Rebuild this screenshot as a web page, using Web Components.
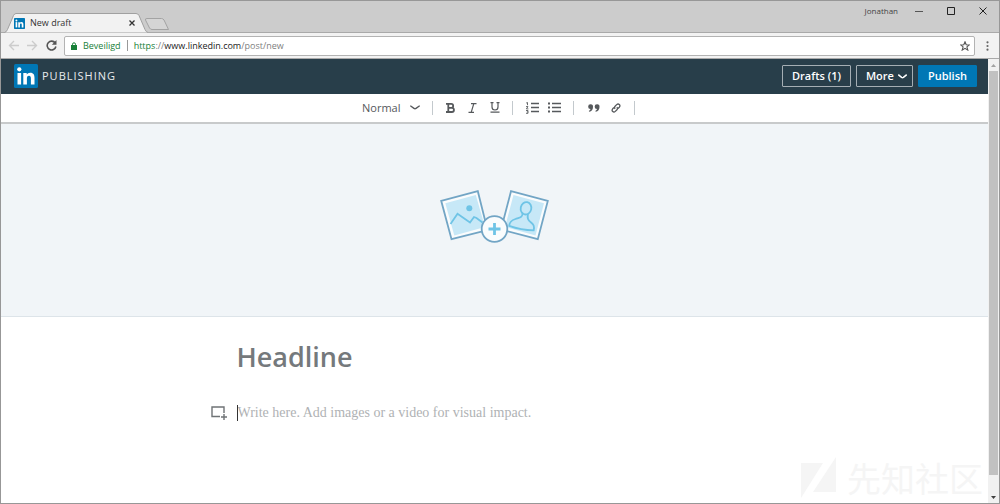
<!DOCTYPE html>
<html lang="en">
<head>
<meta charset="utf-8">
<meta name="viewport" content="width=device-width, initial-scale=1">
<title>New draft</title>
<style>
  html, body { margin: 0; }
  body { font-family: "Open Sans", "Noto Sans", sans-serif; background: #fff; }
</style>
</head>
<body>
<browser-window>
  <tab-strip slot="tabs" user="Jonathan">New draft</tab-strip>
  <address-bar slot="address"></address-bar>
  <publishing-header></publishing-header>
  <format-toolbar></format-toolbar>
  <cover-picker></cover-picker>
  <draft-editor></draft-editor>
  <water-mark>先知社区</water-mark>
</browser-window>

<script>
const RESET = `
  *, *::before, *::after { box-sizing: border-box; }
  button, input, textarea, select { font: inherit; color: inherit; margin: 0; padding: 0; border: 0; background: none; outline: 0; }
  svg { display: block; flex: none; }
`;

function define(name, css, html) {
  const template = document.createElement('template');
  template.innerHTML = `<style>${RESET}${css}</style>${html}`;
  customElements.define(name, class extends HTMLElement {
    constructor() {
      super();
      this.attachShadow({ mode: 'open' }).append(template.content.cloneNode(true));
      const user = this.shadowRoot.querySelector('.user');
      if (user) user.textContent = this.getAttribute('user');
    }
  });
}

define('linkedin-logo', `
  :host { display: block; width: 24px; height: 24px; flex: none; }
  svg { width: 100%; height: 100%; }
`, `
  <svg viewBox="0 0 24 24" role="img" aria-label="LinkedIn">
    <rect width="24" height="24" rx="1.5" fill="#0077b5"/>
    <g fill="#fff">
      <circle cx="5.3" cy="5.3" r="2.1"/>
      <rect x="3.5" y="9" width="3.6" height="11.5"/>
      <path d="M9.3 9h3.4v1.6c.6-1.1 1.9-1.9 3.5-1.9 3.5 0 4.3 2.3 4.3 5.3v6.500h-3.600v-5.800c0-1.500-.2-2.900-1.900-2.900-1.700 0-2.100 1.300-2.100 2.800v5.900H9.300z"/>
    </g>
  </svg>
`);

define('browser-window', `
  :host { display: flex; flex-direction: column; min-height: 100vh; box-sizing: border-box; border: 1px solid #979797; background: #fff; }
  .view { flex: 1; display: flex; }
  main { flex: 1; min-width: 0; position: relative; }
  .scroll { width: 11px; display: flex; flex-direction: column; align-items: center; background: #f1f1f1; }
  .scroll span { height: 12px; display: grid; place-items: center; }
  .thumb { flex: 1; width: 9px; background: #c1c1c1; }
  .rest { height: 16px; }
`, `
  <slot name="tabs"></slot>
  <slot name="address"></slot>
  <div class="view">
    <main><slot></slot></main>
    <div class="scroll" aria-hidden="true">
      <span><svg width="5" height="3"><path d="M0 3h5L2.500 0z" fill="#a3a3a3"/></svg></span>
      <div class="thumb"></div>
      <div class="rest"></div>
      <span><svg width="5" height="3"><path d="M0 0h5L2.500 3z" fill="#404040"/></svg></span>
    </div>
  </div>
`);

define('tab-strip', `
  :host { display: flex; height: 32px; background: linear-gradient(#ccc, #ccc 31px, #a9a9a9 31px); color: #333; }
  .tab { display: grid; width: 144px; margin: 12px 0 0 3px; height: 20px; }
  .tab > * { grid-area: 1 / 1; }
  .label { display: flex; align-items: center; padding: 0 12px 0 10px; font-size: 9px; line-height: 16px; }
  linkedin-logo { width: 11px; height: 11px; margin-right: 5px; }
  .label button { margin-left: auto; width: 8px; height: 16px; display: grid; place-items: center; }
  .new { align-self: flex-start; margin-top: 17px; margin-left: -4px; height: 12px; }
  .controls { margin-left: auto; display: flex; height: 20px; align-items: center; }
  .user { font-size: 8px; line-height: 12px; margin-right: 16px; color: #444; }
  .controls button { width: 10px; height: 20px; display: grid; place-items: center; margin-right: 22px; }
  .controls button:last-child { margin-right: 11px; }
`, `
  <div class="tab">
    <svg width="144" height="20"><path d="M0 20L.5 19.500Q2.500 19 3.500 16.500L9.500 2.500Q10.500.5 12 .5H132Q134 .5 135 2.500L141 16.500Q142 19 144 19.500V20z" fill="#f2f2f2" stroke="#a0a0a0"/></svg>
    <div class="label"><linkedin-logo></linkedin-logo><slot></slot>
      <button aria-label="Close tab"><svg width="6" height="6"><path d="M.5.5l5 5M5.500.5l-5 5" stroke="#333" stroke-width="1.300"/></svg></button></div>
  </div>
  <button class="new" aria-label="New tab"><svg width="26" height="13"><path d="M3 .5H17.500Q19 .5 20 2L24.500 11.500H8Q6.500 11.500 5.500 10L1.500 2Q1 .5 3 .5z" fill="#d5d5d5" stroke="#a3a3a3"/></svg></button>
  <div class="controls">
    <span class="user"></span>
    <button aria-label="Minimize"><svg width="8" height="8"><path d="M0 4.500h8" stroke="#555"/></svg></button>
    <button aria-label="Maximize"><svg width="8" height="8"><path d="M.5.5h7v7h-7z" fill="none" stroke="#222"/></svg></button>
    <button aria-label="Close"><svg width="8" height="8"><path d="M.5.5l7 7M7.500.5l-7 7" stroke="#222"/></svg></button>
  </div>
`);

define('address-bar', `
  :host { display: flex; align-items: center; height: 26px; box-sizing: border-box; padding: 0 8px 0 7px; background: #f2f2f2; border-bottom: 1px solid #a9a9a9; color: #808080; }
  nav { display: flex; gap: 8px; margin-right: 7px; }
  .field { flex: 1; display: flex; align-items: center; height: 20px; background: #fff; border: 1px solid #b3b3b3; border-radius: 2px; font-size: 9px; line-height: 16px; padding: 0 4px 0 6px; }
  .safe { color: #188038; padding: 0 6px; margin-right: 6px; border-right: 1px solid #999; line-height: 11px; }
  .url { flex: 1; outline: 0; white-space: nowrap; }
  .url i { font-style: normal; color: #188038; }
  .url b { font-weight: 400; color: #222; }
  .menu { margin-left: 9px; width: 7px; display: grid; place-items: center; }
`, `
  <nav>
    <button aria-label="Back"><svg width="11" height="11"><path d="M11 5.500H1.500M6 1L1.500 5.500 6 10" fill="none" stroke="#ccc" stroke-width="1.400"/></svg></button>
    <button aria-label="Forward"><svg width="11" height="11"><path d="M0 5.500h9.500M5 1l4.500 4.500L5 10" fill="none" stroke="#ccc" stroke-width="1.400"/></svg></button>
    <button aria-label="Reload"><svg width="11" height="11"><path d="M9.200 3A4.400 4.400 0 1 0 9.900 6.500" fill="none" stroke="#555" stroke-width="1.600"/><path d="M10.500 0v4.800H5.800z" fill="#555"/></svg></button>
  </nav>
  <div class="field">
    <svg width="6" height="8"><path d="M1.500 4V2.300a1.500 1.500 0 0 1 3 0V4" fill="none" stroke="#188038"/><rect y="3" width="6" height="5" fill="#188038"/></svg>
    <span class="safe">Beveiligd</span>
    <span class="url" role="textbox" aria-label="Address" contenteditable="true" spellcheck="false"><i>https</i>://<b>www.linkedin.com</b>/post/new</span>
    <button aria-label="Bookmark"><svg width="10" height="10" viewBox="0 0 10 10"><path d="M5 .8l1.200 2.900 3.200.2-2.500 2 .9 3.200L5 7.400 2.200 9.100l.9-3.200-2.500-2 3.200-.2z" fill="none" stroke="#555" stroke-width="1.100"/></svg></button>
  </div>
  <button class="menu" aria-label="Menu"><svg width="3" height="10" fill="#666"><circle cx="1.500" cy="1.300" r="1.100"/><circle cx="1.500" cy="5" r="1.100"/><circle cx="1.500" cy="8.700" r="1.100"/></svg></button>
`);

define('publishing-header', `
  :host { display: flex; align-items: center; height: 35px; box-sizing: border-box; padding: 0 11px 1px 13px; background: #283e4a; color: #fff; }
  .brand { font-size: 11px; line-height: 16px; letter-spacing: 1px; color: #e8ebed; text-decoration: none; margin-left: 4px; }
  .actions { display: flex; gap: 5px; margin-left: auto; }
  .actions button { height: 22px; display: flex; align-items: center; justify-content: center; gap: 4px; border: 1px solid #a5aeb4; border-radius: 1px; font-size: 11px; line-height: 16px; font-weight: 600; padding: 0 9px; }
  .actions .more { padding: 0 5px 0 9px; }
  .actions .publish { background: #0077b5; border-color: #0077b5; }
`, `
  <linkedin-logo></linkedin-logo>
  <a class="brand" href="#">PUBLISHING</a>
  <div class="actions">
    <button>Drafts (1)</button>
    <button class="more">More <svg width="9" height="5"><path d="M.3.7L3.600 3.400Q4.500 4 5.400 3.400L8.700.7" fill="none" stroke="#fff" stroke-width="1.500"/></svg></button>
    <button class="publish">Publish</button>
  </div>
`);

define('format-toolbar', `
  :host { display: flex; justify-content: center; align-items: center; height: 30px; box-sizing: border-box; padding: 0 5px 1px 0; border-bottom: 2px solid #c8cacb; background: #fff; color: #56595c; }
  .group { display: flex; align-items: center; height: 14px; border-right: 1px solid #c3c9cd; padding: 0 12px 0 13px; gap: 9px; }
  .group:first-child { padding: 0 18px 0 0; gap: 4px; }
  .group.marks { padding: 0 11px; }
  select { appearance: none; width: 39px; font-size: 11px; line-height: 16px; height: 16px; }
  button { display: grid; place-items: center; width: 13px; height: 14px; }
`, `
  <div class="group">
    <select aria-label="Text style"><option>Normal</option></select>
    <svg width="10" height="5"><path d="M.3.7L4 3.400Q5 4.100 6 3.400L9.700.7" fill="none" stroke="#56595c" stroke-width="1.400"/></svg>
  </div>
  <div class="group marks">
    <button aria-label="Bold"><svg width="9" height="10"><path d="M0 .9h5.200a2 2 0 0 1 0 4H2.300M5 4.900h.9a2.050 2.050 0 0 1 0 4.100H0M2.300.9v8" fill="none" stroke="#56595c" stroke-width="1.800"/></svg></button>
    <button aria-label="Italic"><svg width="9" height="10"><path d="M3 .6h5.500M.5 9.400H6M5.800.6L3.200 9.400" fill="none" stroke="#56595c" stroke-width="1.200"/></svg></button>
    <button aria-label="Underline"><svg width="10" height="11"><path d="M.5.600h3M6.500.600h3M2 .600v4.400a3 3 0 0 0 6 0V.600M.5 10.200h9" fill="none" stroke="#56595c" stroke-width="1.200"/></svg></button>
  </div>
  <div class="group">
    <button aria-label="Numbered list"><svg width="13" height="12"><path d="M5 1.500h8M5 5.500h8M5 9.500h8" stroke="#56595c" stroke-width="1.300"/><path d="M.2 1L1.500.5V3.200M0 4.600h2L.4 6.900h2M0 8.500h2v2.800H0M.8 9.900H2" fill="none" stroke="#56595c" stroke-width=".9"/></svg></button>
    <button aria-label="Bulleted list"><svg width="13" height="11"><path d="M4 1.500h9M4 5.500h9M4 9.500h9" stroke="#56595c" stroke-width="1.300"/><path d="M0 1.500h2M0 5.500h2M0 9.500h2" stroke="#56595c" stroke-width="2"/></svg></button>
  </div>
  <div class="group">
    <button aria-label="Quote"><svg width="12" height="8" fill="#56595c"><path d="M2.500.3A2.400 2.400 0 0 1 5 2.900C5 5.500 3.600 7 1.300 7.800L.8 6.900c1-.5 1.600-1.100 1.700-1.900A2.350 2.350 0 0 1 2.500.3zM9 .3a2.400 2.400 0 0 1 2.500 2.600c0 2.600-1.400 4.100-3.700 4.900l-.5-.9C8.300 6.400 8.900 5.800 9 5A2.350 2.350 0 0 1 9 .3z"/></svg></button>
    <button aria-label="Link"><svg width="10" height="10" fill="none" stroke="#56595c" stroke-width="1.300"><path d="M4.200 5.800C3 4.600 3.700 3.600 4.300 3L5.700 1.600C7.400 0 10 2 8.300 4.200L7 5.500M5.800 4.200C7 5.400 6.300 6.400 5.700 7L4.300 8.400C2.600 10 0 8 1.700 5.800L3 4.500"/></svg></button>
  </div>
`);

define('cover-picker', `
  :host { display: block; border-bottom: 1px solid #dde4e9; background: #f1f5f8; }
  button { width: 100%; height: 192px; padding: 0 0 4px 1px; display: grid; place-items: center; }
`, `
  <button aria-label="Add a cover image">
    <svg width="110" height="56" viewBox="0 0 110 56" fill="none">
      <path d="M1.200 10.800L37.800 1.200L47.500 40L11.500 49.200z" fill="#fafcfd" stroke="#72a5c5" stroke-width="1.800"/>
      <path d="M5.300 13.300L35.800 5L45 37L14.300 45.500z" fill="#c7e8f7"/>
      <circle cx="29.300" cy="18.200" r="3" fill="#6fc4e6"/>
      <path d="M10.500 34L17.500 23.800L30 32.500L34 27L36.500 28L42.500 32.500" stroke="#6fc4e6" stroke-width="1.800"/>
      <path d="M71 1.200L107.800 11L97.800 49.200L61 39.500z" fill="#fafcfd" stroke="#72a5c5" stroke-width="1.800"/>
      <path d="M73.500 5L104 13.300L95.500 45.500L65 37z" fill="#c7e8f7"/>
      <ellipse cx="86" cy="18.300" rx="5.300" ry="6.200" transform="rotate(12 86 18.300)" stroke="#6fc4e6" stroke-width="1.800"/>
      <path d="M82.500 22.500C83 27.500 80 27.500 75.500 29C71 30.500 69.500 32 69.200 35.800Q81 40 93.700 40.300C94.500 36 93.800 34.500 90.500 32C87.500 30 87 28 88 24" stroke="#6fc4e6" stroke-width="1.800"/>
      <circle cx="54.500" cy="39" r="12.800" fill="#fafcfd" stroke="#72a5c5" stroke-width="1.800"/>
      <path d="M54.500 33v12M48.500 39h12" stroke="#6fc4e6" stroke-width="2.800"/>
    </svg>
  </button>
`);

define('draft-editor', `
  :host { display: grid; grid-template-columns: 26px minmax(0, 514px) 28px; justify-content: center; row-gap: 28px; padding-top: 20px; }
  input { grid-column: 2; width: 100%; height: 40px; font-size: 27px; line-height: 40px; font-weight: 600; }
  input::placeholder { color: #75797c; opacity: 1; }
  button { grid-column: 1; width: 16px; height: 16px; display: grid; place-items: center; }
  textarea { grid-column: 2; display: block; width: 100%; height: 16px; resize: none; overflow: hidden; border-left: 1px solid #333; font: 14px/16px "Liberation Serif", serif; }
  textarea::placeholder { color: #afb2b4; opacity: 1; }
`, `
  <input type="text" aria-label="Headline" placeholder="Headline">
  <button aria-label="Add media"><svg width="16" height="14" fill="none" stroke="#6f7376"><path d="M9 10.500H1V1h12v6" stroke-width="1.400"/><path d="M13 8v6M10 11h6" stroke-width="1.400"/></svg></button>
  <textarea aria-label="Article" placeholder="Write here. Add images or a video for visual impact."></textarea>
`);

define('water-mark', `
  :host { position: absolute; right: 5px; bottom: 4px; display: flex; align-items: center; gap: 10px; color: #f5f5f5; font: 34px/40px "Noto Sans CJK SC", sans-serif; pointer-events: none; }
`, `
  <svg width="36" height="42" fill="#f5f5f5"><path d="M0 6H22L0 41zM35 0V35H12z"/></svg>
  <slot></slot>
`);
</script>
</body>
</html>
